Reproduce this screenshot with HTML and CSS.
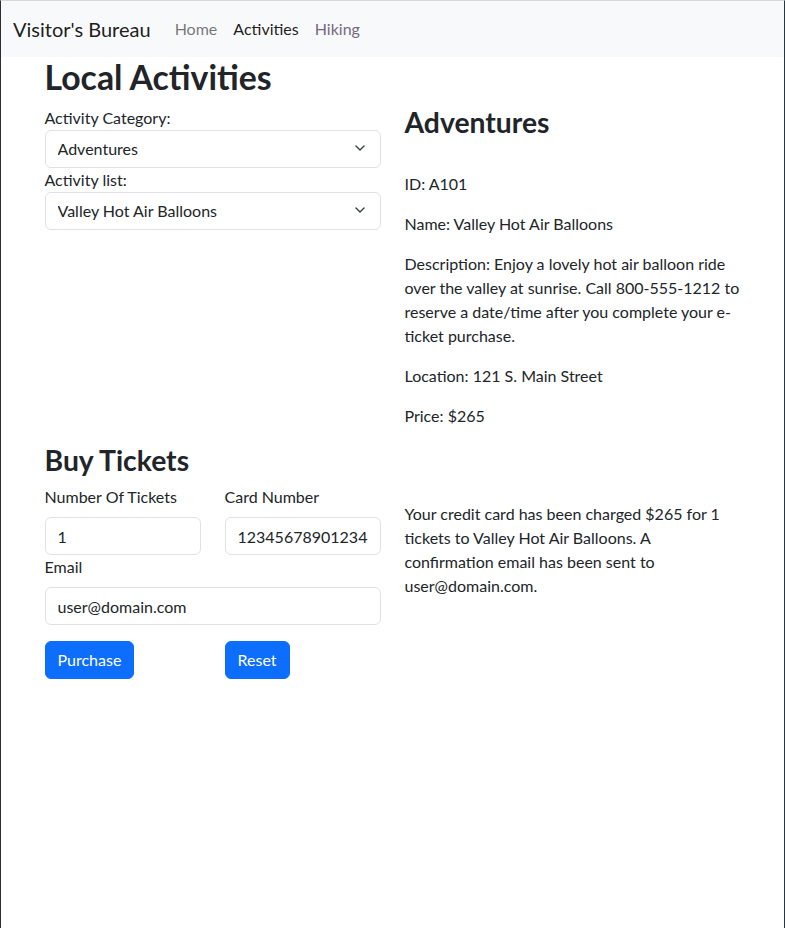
FILE: index.html
```html
<!DOCTYPE html>
<html lang="en">
<head>
<meta charset="utf-8">
<title>Visitor's Bureau</title>
<link rel="stylesheet" href="styles.css">
</head>
<body>
<nav class="navbar">
  <a class="brand" href="#">Visitor's Bureau</a>
  <ul class="nav">
    <li><a class="nav-link" href="#">Home</a></li>
    <li><a class="nav-link active" href="#">Activities</a></li>
    <li><a class="nav-link visited" href="#">Hiking</a></li>
  </ul>
</nav>
<main class="container">
  <h1 class="h1">Local Activities</h1>
  <div class="row">
    <div class="col">
      <label class="label-tight" for="cat">Activity Category:</label>
      <div class="select-wrap">
        <select id="cat" class="form-select"><option>Adventures</option></select>
        <svg class="chev" viewBox="0 0 10 6" width="10" height="6"><path d="M1 1 5 5 9 1" fill="none" stroke="#343a40" stroke-width="1.3" stroke-linecap="round" stroke-linejoin="round"/></svg>
      </div>
      <label class="label-tight" for="act">Activity list:</label>
      <div class="select-wrap">
        <select id="act" class="form-select"><option>Valley Hot Air Balloons</option></select>
        <svg class="chev" viewBox="0 0 10 6" width="10" height="6"><path d="M1 1 5 5 9 1" fill="none" stroke="#343a40" stroke-width="1.3" stroke-linecap="round" stroke-linejoin="round"/></svg>
      </div>
    </div>
    <div class="col">
      <h2 class="h2">Adventures</h2>
      <div class="spacer"></div>
      <p>ID: A101</p>
      <p>Name: Valley Hot Air Balloons</p>
      <p>Description: Enjoy a lovely hot air balloon ride over the valley at sunrise. Call 800-555-1212 to reserve a date/time after you complete your e-ticket purchase.</p>
      <p>Location: 121 S. Main Street</p>
      <p>Price: $265</p>
    </div>
  </div>
  <div class="row">
    <div class="col">
      <h2 class="h2">Buy Tickets</h2>
      <div class="pair">
        <div>
          <label class="form-label" for="num">Number Of Tickets</label>
          <input id="num" class="form-control" type="text" value="1">
        </div>
        <div>
          <label class="form-label" for="card">Card Number</label>
          <input id="card" class="form-control" type="text" value="1234567890123456">
        </div>
      </div>
      <label class="form-label" for="email">Email</label>
      <input id="email" class="form-control" type="text" value="user@domain.com">
      <div class="pair buttons">
        <div><button class="btn" type="button">Purchase</button></div>
        <div><button class="btn" type="button">Reset</button></div>
      </div>
    </div>
    <div class="col confirm">
      <p>Your credit card has been charged $265 for 1 tickets to Valley Hot Air Balloons. A confirmation email has been sent to user@domain.com.</p>
    </div>
  </div>
</main>
</body>
</html>
```
FILE: styles.css
```css
* { box-sizing: border-box; }
html { height: 100%; }
body {
  margin: 0;
  min-height: 100%;
  font-family: "Lato", "Liberation Sans", sans-serif;
  font-size: 16px;
  line-height: 1.5;
  color: #212529;
  background: #fff;
  border-top: 1px solid #d6d8da;
  border-left: 1px solid #2b2f33;
  border-right: 1px solid #1f3a44;
}
.navbar {
  display: flex;
  align-items: center;
  height: 56px;
  padding: 8px 12px;
  background: #f8f9fa;
}
.brand {
  font-size: 20px;
  line-height: 30px;
  padding: 5px 0;
  margin-right: 16px;
  color: rgba(0,0,0,.9);
  text-decoration: none;
}
.nav {
  display: flex;
  list-style: none;
  margin: 0;
  padding: 0;
}
.nav-link {
  display: block;
  padding: 8px;
  color: rgba(0,0,0,.55);
  text-decoration: none;
}
.nav-link.active { color: rgba(0,0,0,.9); }
.nav-link.visited { color: #76687e; }
.container {
  width: 720px;
  margin: 0 auto;
  padding: 0 12px;
}
.h1 {
  margin: 0 0 8px;
  font-size: 33.8px;
  font-weight: 700;
  line-height: 1.2;
}
.h2 {
  margin: 0 0 8px;
  font-size: 28.3px;
  font-weight: 700;
  line-height: 1.2;
}
.row {
  display: grid;
  grid-template-columns: 1fr 1fr;
  column-gap: 24px;
}
.col { min-width: 0; }
p { margin: 0 0 16px; }
.spacer { height: 24px; }
.confirm { padding-top: 58px; }
.label-tight { display: block; }
.form-label { display: block; margin-bottom: 8px; }
.select-wrap { position: relative; }
.form-select, .form-control {
  display: block;
  width: 100%;
  height: 38px;
  padding: 6px 12px;
  font: inherit;
  line-height: 1.5;
  color: #212529;
  background: #fff;
  border: 1px solid #dee2e6;
  border-radius: 6px;
  appearance: none;
  -webkit-appearance: none;
}
.form-select { padding-right: 36px; }
.chev {
  position: absolute;
  right: 16px;
  top: 15px;
  pointer-events: none;
}
.pair {
  display: grid;
  grid-template-columns: 1fr 1fr;
  column-gap: 24px;
}
.buttons { margin-top: 16px; }
.btn {
  font: inherit;
  line-height: 1.5;
  height: 38px;
  padding: 6px 12px;
  color: #fff;
  background: #0d6efd;
  border: 1px solid #0d6efd;
  border-radius: 6px;
}
```
